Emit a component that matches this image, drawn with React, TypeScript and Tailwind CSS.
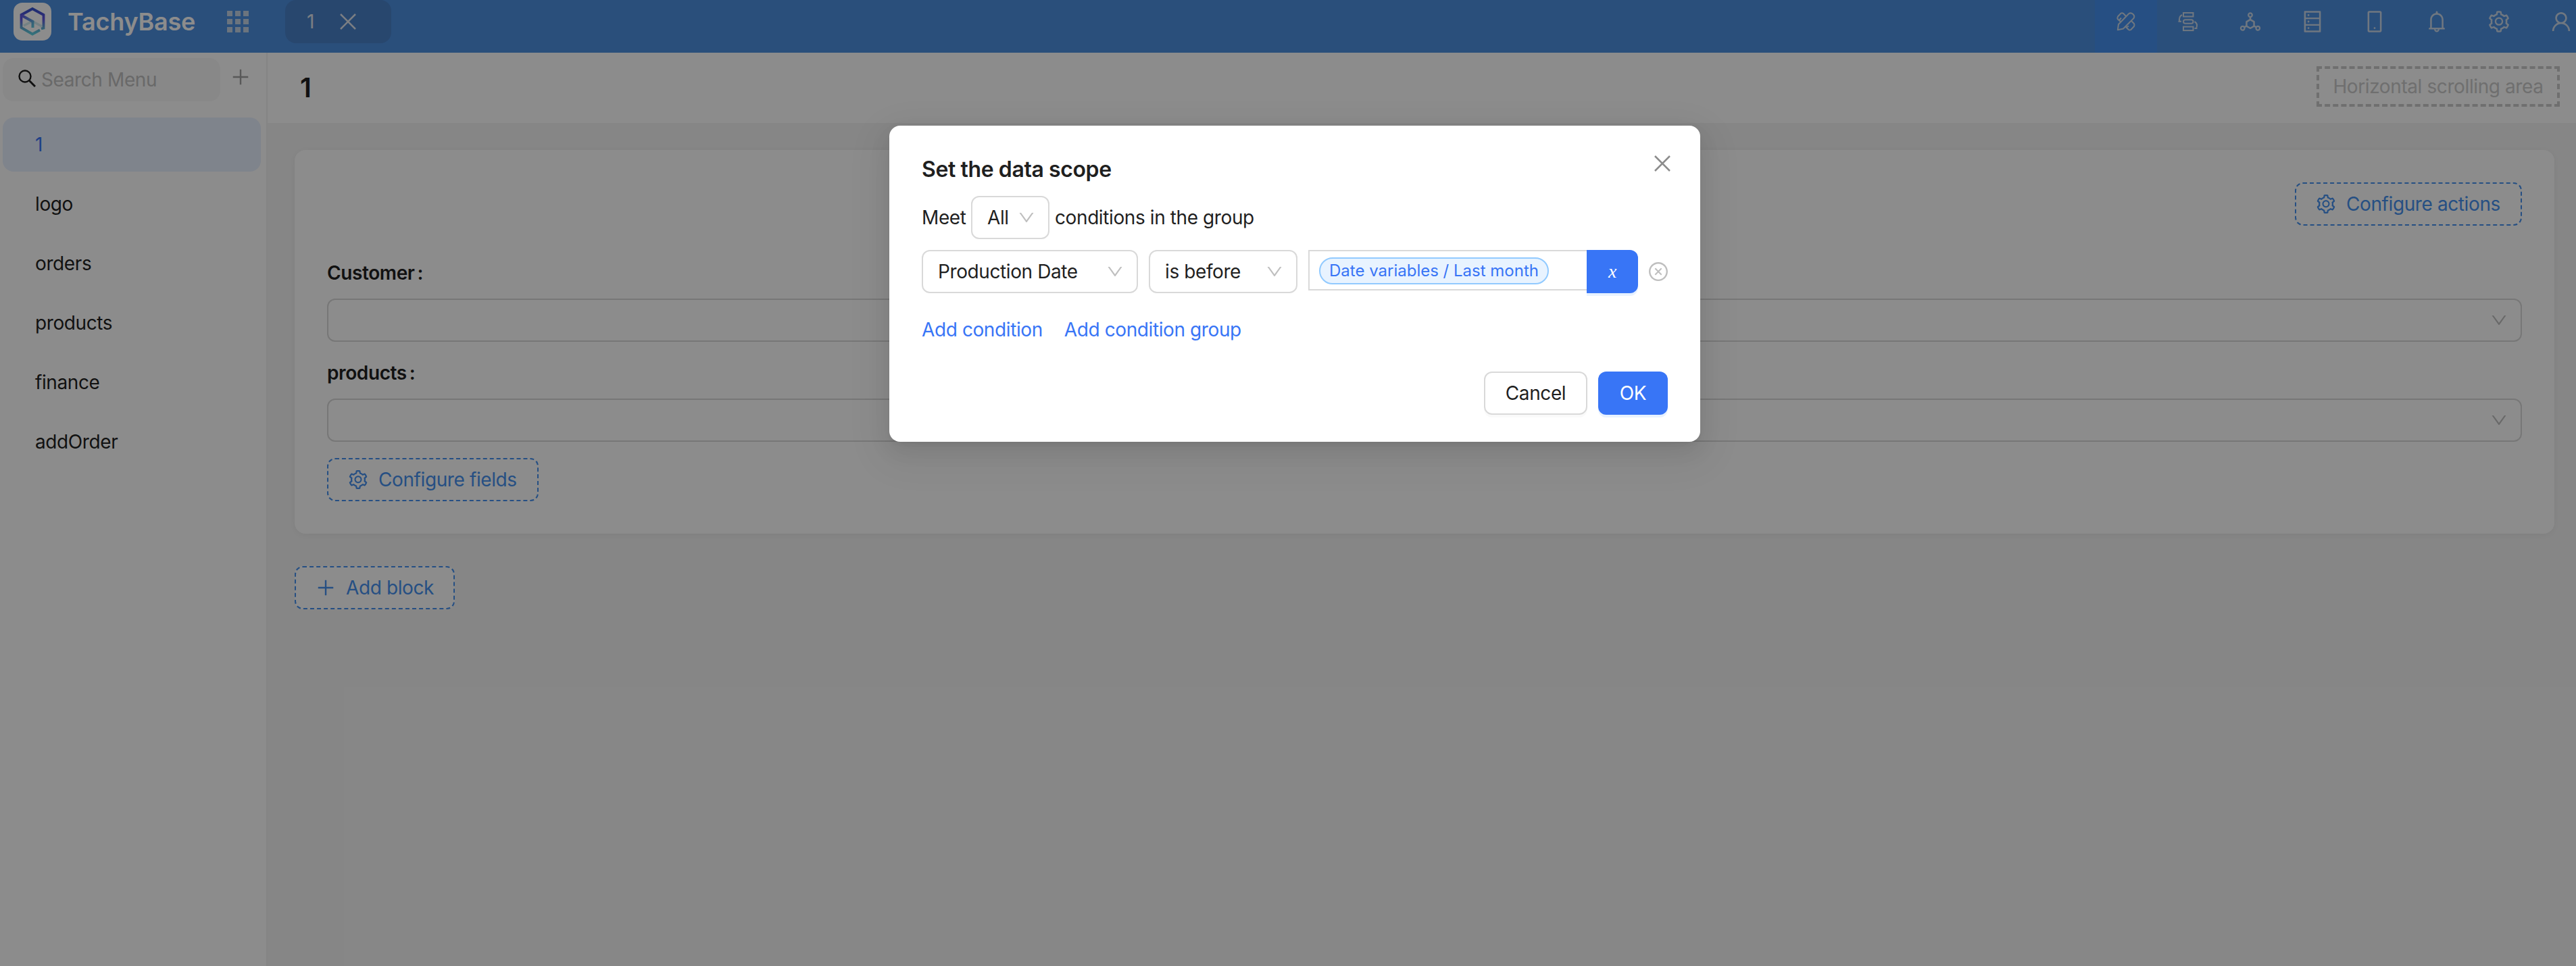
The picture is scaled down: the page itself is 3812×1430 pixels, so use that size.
import React from "react";
import {
  AiOutlineBell, AiOutlineCloseCircle, AiOutlineDatabase, AiOutlineDeploymentUnit,
  AiOutlineDown, AiOutlineMobile, AiOutlinePlus, AiOutlineSetting, AiOutlineUser,
} from "react-icons/ai";

const Logo = () => (
  <svg width="56" height="56" viewBox="0 0 56 56" className="mt-1 shrink-0">
    <defs>
      <linearGradient id="hex" x1="0" y1="0" x2="0" y2="1">
        <stop offset="0" stopColor="#3352cc" />
        <stop offset="0.4" stopColor="#6152e0" />
        <stop offset="0.75" stopColor="#5fa8d0" />
        <stop offset="1" stopColor="#5fd0e0" />
      </linearGradient>
      <linearGradient id="arm" x1="0" y1="0" x2="1" y2="1">
        <stop offset="0" stopColor="#6152e0" />
        <stop offset="1" stopColor="#5fc8dc" />
      </linearGradient>
    </defs>
    <rect width="56" height="56" rx="13" fill="#fff" />
    <path d="M15 34L28 27.500L42 35" fill="none" stroke="#d2ecf0" strokeWidth="3.500" />
    <path d="M41 38.500L44.500 37.500V18L28 9L11.500 18V37L28 46.500L39 40.500" fill="none" stroke="url(#hex)" strokeWidth="3.800" />
    <path d="M11.500 18.500L28.500 28V37" fill="none" stroke="url(#arm)" strokeWidth="4" />
  </svg>
);

const CloseIcon = ({ className = "" }: { className?: string }) => (
  <svg width="24" height="24" viewBox="0 0 24 24" fill="none" stroke="currentColor" strokeWidth="2.500" className={className}>
    <path d="M1 1L23 23M23 1L1 23" />
  </svg>
);

const SearchIcon = () => (
  <svg width="26" height="26" viewBox="0 0 26 26" fill="none" stroke="currentColor" strokeWidth="2.400" className="mt-[-4px] shrink-0 text-[#1f1f1f]">
    <circle cx="10" cy="10" r="8.500" />
    <path d="M16 16L25 25" strokeWidth="3" />
  </svg>
);

const DesignIcon = () => (
  <svg width="36" height="36" viewBox="0 0 36 36" fill="none" stroke="currentColor" strokeWidth="2" strokeLinejoin="round">
    <path d="M5.800 30.300L7 22L22 6.500Q25 4 28.500 7Q31.500 10 29.500 13L14 28.500Z" />
    <path d="M18.500 10.500L14 5.800Q12 4.500 10.500 5.800L6 10.500Q4.800 12.500 6 14.500L10.500 18.500M11 12.500L8.500 15.500" />
    <path d="M26 17L30 21Q31 23 30 25L25.500 29.800Q23.500 31 22 30L17.500 25.500M19.500 26L22 24.500" />
  </svg>
);

const FlowIcon = () => (
  <svg width="36" height="36" viewBox="0 0 36 36" fill="none" stroke="currentColor" strokeWidth="2">
    <rect x="11" y="5" width="14.500" height="5.500" />
    <rect x="11" y="15.300" width="14.500" height="5.500" rx="2.750" />
    <rect x="11" y="25.600" width="14.500" height="5.500" />
    <path d="M9 8Q3.500 11 5.500 18M3.500 17.800H8M27.500 18Q33 21 30 28M27.500 28H31.500" />
  </svg>
);

const Select = ({ label, className }: { label: string; className: string }) => (
  <div className={`flex h-16 shrink-0 items-center justify-between rounded-xl border-2 border-[#d9d9d9] bg-white pl-[22px] pr-[18px] ${className}`}>
    <span>{label}</span>
    <AiOutlineDown size={28} className="text-[#bfbfbf]" />
  </div>
);

const Dashed = ({ icon, label, className }: { icon: React.ReactNode; label: string; className: string }) => (
  <div className={`flex h-16 items-center gap-[14px] whitespace-nowrap rounded-xl border-2 border-dashed border-[#4591ee] bg-white pl-7 text-[#4591ee] ${className}`}>
    {icon}
    <span>{label}</span>
  </div>
);

const Field = ({ label }: { label: string }) => (
  <div className="h-[148px]">
    <div className="flex h-14 items-center font-semibold">{label}<span className="ml-1">:</span></div>
    <div className="mt-[10px] flex h-16 items-center justify-end rounded-xl border-2 border-[#d9d9d9] pr-[18px]">
      <AiOutlineDown size={28} className="text-[#bfbfbf]" />
    </div>
  </div>
);

export default function App() {
  const tools = [DesignIcon, FlowIcon, AiOutlineDeploymentUnit, AiOutlineDatabase, AiOutlineMobile, AiOutlineBell, AiOutlineSetting, AiOutlineUser];
  return (
    <div className="relative h-[1430px] w-[3812px] overflow-hidden bg-[#f5f5f5] font-['Inter',sans-serif] text-[28px] leading-[44px] tracking-[-0.4px] text-[#1f1f1f]">
      <header className="flex h-[78px] items-start overflow-hidden bg-[#4e90e0] pl-5 text-white">
        <Logo />
        <div className="ml-6 flex h-16 w-[236px] items-center text-[36px] font-semibold tracking-[-0.2px]">TachyBase</div>
        <div className="mt-4 grid shrink-0 grid-cols-3 gap-1 text-[#c4d4e6]">
          {Array.from({ length: 9 }, (_, i) => <i key={i} className="size-2 bg-current" />)}
        </div>
        <div className="ml-[54px] flex h-16 w-[157px] items-center rounded-2xl bg-[#4981c9] pl-8 text-[#e0e6ee]">
          <span className="w-[49px]">1</span>
          <CloseIcon />
        </div>
        <div className="ml-auto flex h-full w-[712px] shrink-0 text-[#cbd9ea]">
          {tools.map((Icon, i) => (
            <div key={i} className={`h-full w-[92px] shrink-0 px-7 pt-[14px] ${i === 0 ? "bg-[#4591ee]" : ""}`}>
              <Icon size={36} />
            </div>
          ))}
        </div>
      </header>
      <div className="flex h-[1352px]">
        <aside className="w-[396px] shrink-0 border-r-2 border-[#f0f0f0] bg-white pl-1 pt-2">
          <div className="flex">
            <div className="flex h-16 w-[322px] items-center gap-2 rounded-2xl bg-[#f8f8f8] pl-[23px] text-[#bfbfbf]">
              <SearchIcon />Search Menu
            </div>
            <AiOutlinePlus size={32} className="ml-[14px] mt-3 text-[#a0a0a0]" />
          </div>
          <nav className="mt-6 flex flex-col gap-2">
            {["1", "logo", "orders", "products", "finance", "addOrder"].map((t, i) => (
              <div key={t} className={`flex h-20 w-[382px] items-center rounded-2xl pl-12 ${i === 0 ? "bg-[#e8f0ff] text-[#3875f6]" : ""}`}>{t}</div>
            ))}
          </nav>
        </aside>
        <main className="flex-1">
          <div className="flex h-[104px] items-center justify-between bg-white pl-12 pr-6">
            <h1 className="text-[40px] font-semibold">1</h1>
            <div className="mb-1 flex h-[60px] w-[360px] items-center justify-center whitespace-nowrap border-4 border-dashed border-[#cacaca] text-[#cacaca]">Horizontal scrolling area</div>
          </div>
          <section className="ml-10 mr-8 mt-10 h-[568px] rounded-2xl bg-white px-12 pt-12 shadow-[0_2px_12px_rgba(0,0,0,0.06)]">
            <Dashed className="ml-auto w-[336px]" icon={<AiOutlineSetting size={32} />} label="Configure actions" />
            <div className="mt-[42px]"><Field label="Customer" /><Field label="products" /></div>
            <Dashed className="mt-[6px] w-[313px]" icon={<AiOutlineSetting size={32} />} label="Configure fields" />
          </section>
          <Dashed className="ml-10 mt-12 w-[237px]" icon={<AiOutlinePlus size={32} />} label="Add block" />
        </main>
      </div>

      <div className="absolute inset-0 bg-black/45 pl-[1316px] pt-[186px]">
        <div className="relative h-[468px] w-[1200px] rounded-2xl bg-white px-12 pt-10 shadow-[0_12px_32px_rgba(0,0,0,0.08),0_6px_12px_-8px_rgba(0,0,0,0.12),0_18px_56px_16px_rgba(0,0,0,0.05)]">
          <CloseIcon className="absolute right-11 top-11 text-[#8c8c8c]" />
          <h2 className="h-12 pt-[1px] text-[32px] font-semibold leading-[48px]">Set the data scope</h2>
          <div className="mt-4 flex items-center">
            <span className="w-[73px]">Meet</span>
            <Select label="All" className="w-[116px]" />
            <span className="ml-2">conditions in the group</span>
          </div>
          <div className="mt-4 flex items-start">
            <Select label="Production Date" className="w-80" />
            <Select label="is before" className="ml-4 w-[220px]" />
            <div className="ml-4 flex h-[60px] w-[412px] shrink-0 items-center border-2 border-r-0 border-[#d9d9d9] pl-[14px]">
              <span className="mt-0.5 flex h-10 w-[340px] items-center justify-center whitespace-nowrap rounded-full border-2 border-[#91caff] bg-[#e8f3ff] text-[24px] tracking-normal text-[#3875f6]">Date variables / Last month</span>
            </div>
            <div className="flex h-16 w-[76px] shrink-0 items-center justify-center rounded-r-xl bg-[#3875f6] font-['Liberation_Serif',serif] text-[28px] italic text-white shadow-[0_4px_0_#e8f2ff]">x</div>
            <AiOutlineCloseCircle size={32} className="ml-[14px] mt-4 shrink-0 text-[#bfbfbf]" />
          </div>
          <div className="mt-8 flex gap-8 text-[#3875f6]"><span>Add condition</span><span>Add condition group</span></div>
          <div className="mt-10 flex justify-end gap-4">
            <div className="flex h-16 w-[153px] items-center justify-center rounded-xl border-2 border-[#d9d9d9] shadow-[0_4px_0_rgba(0,0,0,0.02)]">Cancel</div>
            <div className="flex h-16 w-[103px] items-center justify-center rounded-xl bg-[#3875f6] text-white shadow-[0_4px_0_#e8f2ff]">OK</div>
          </div>
        </div>
      </div>
    </div>
  );
}
